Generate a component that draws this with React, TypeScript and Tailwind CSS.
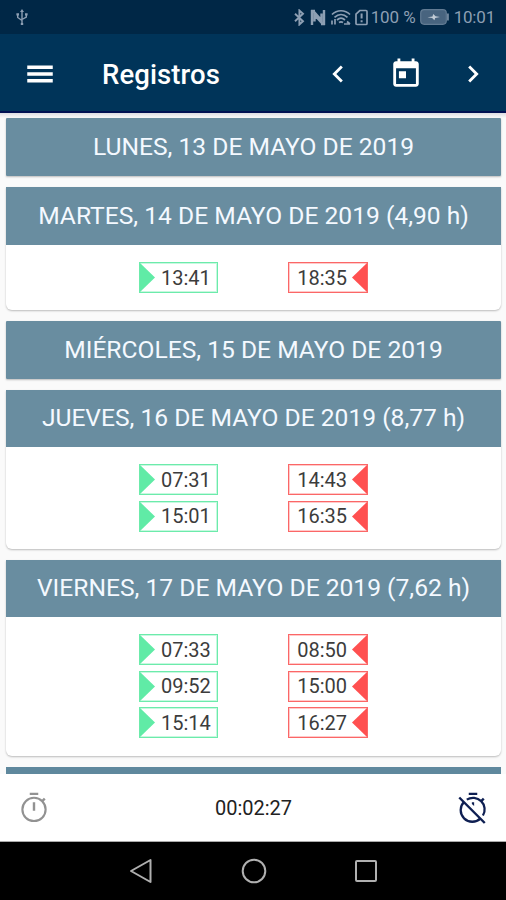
import React from "react";

type IconProps = { d: string; className?: string };

function Icon({ d, className = "" }: IconProps) {
  return (
    <svg viewBox="0 0 24 24" fill="currentColor" className={`size-[34px] shrink-0 ${className}`}>
      <path d={d} />
    </svg>
  );
}

const MENU = "M3 18h18v-2.4H3V18zm0-4.8h18v-2.4H3v2.4zM3 6v2.4h18V6H3z";
const LEFT = "M15.41 7.41L14 6l-6 6 6 6 1.41-1.41L10.83 12z";
const RIGHT = "M10 6L8.59 7.41 13.17 12l-4.58 4.59L10 18l6-6z";
const TODAY =
  "M19 3h-1V1h-2v2H8V1H6v2H5c-1.11 0-1.99.9-1.99 2L3 19c0 1.1.89 2 2 2h14c1.1 0 2-.9 2-2V5c0-1.1-.9-2-2-2zm0 16H5V8h14v11zM7 10h5v5H7z";

function TimerIcon() {
  return (
    <svg viewBox="0 0 24 24" fill="none" stroke="currentColor" strokeWidth="1.5" className="size-[34px] text-[#929292]">
      <circle cx="12" cy="13" r="8.2" />
      <path d="M9 2h6M12 8v6M17.8 7.2l1.8-1.8" strokeWidth="1.7" />
    </svg>
  );
}

function TimerOffIcon() {
  return (
    <svg viewBox="0 0 24 24" fill="none" stroke="currentColor" strokeWidth="1.6" className="size-[34px] text-[#0e1f52]">
      <path d="M7.6 6.1A8.2 8.2 0 0 1 19 17.3M17.3 19.3A8.2 8.2 0 0 1 5.7 7.7" />
      <path d="M9 2h6M17.8 7.2l1.8-1.8M2.3 4.6l18 18" strokeWidth="1.7" />
      <path d="M11.2 8h1.6v2.6l-1.6-1.4z" fill="currentColor" stroke="none" />
    </svg>
  );
}

function StatusBar() {
  return (
    <div className="flex h-[34px] shrink-0 items-center bg-[#002746] pr-[11px] pl-[16px] text-[#8d9fb3]">
      <svg viewBox="0 0 12 17" className="h-[17px] w-[12px]" fill="none" stroke="currentColor" strokeWidth="1.4">
        <path d="M6 2v13M1.7 5.5v3L6 11.5M10.3 5v3L6 10.5" />
        <path d="M6 0l2 3H4zM.4 4.2h2.6v2.4H.4zM9 4.2h2.6v2.4H9zM4.8 14h2.4v2H4.8z" fill="currentColor" stroke="none" />
      </svg>
      <div className="ml-auto flex items-center">
        <svg viewBox="0 0 11 17" className="mr-[5px] h-[17px] w-[11px]" fill="none" stroke="currentColor" strokeWidth="1.9">
          <path d="M1 4.8l8 7.4-3.6 3.3V1.5L9 4.8 1 12.2" />
        </svg>
        <svg viewBox="0 0 16 17" className="mr-[4px] h-[17px] w-[16px]" fill="none" stroke="currentColor">
          <path d="M2 16V2.5l2 .3 7.5 8.4V4.5M14 1v13.5l-2-.3L4.5 6v6.5" strokeWidth="2.4" />
          <path d="M1 1.6h4M11 15.4h4" strokeWidth="1.6" />
        </svg>
        <svg viewBox="0 0 22 17" className="mr-[3px] h-[17px] w-[22px]" fill="none" stroke="currentColor" strokeWidth="1.7">
          <path d="M2 5.5c5-5 13-5 18 0M4.5 8.3c4-3.6 9-3.6 13 0M7 11c2.6-2.3 5.4-2.3 8 0M9 13.5c1.4-1 2.6-1 4 0" />
          <path d="M2 11.5v4M5 10v5.5M14 15h6M17 12.5l3 2.5" />
        </svg>
        <svg viewBox="0 0 13 17" className="mr-[3px] h-[17px] w-[13px]" fill="none" stroke="currentColor" strokeWidth="1.7">
          <path d="M4.8 1.5H11c.8 0 1 .3 1 1v12c0 .7-.3 1-1 1H2c-.7 0-1-.3-1-1V5z" />
          <path d="M6.6 4.5v5M6.6 11.2v2" strokeWidth="2" />
        </svg>
        <span className="w-[49px] text-[17px] leading-[20px] tracking-[-0.1px] whitespace-nowrap">100 %</span>
        <svg viewBox="0 0 29 16" className="mr-[5px] h-[16px] w-[29px]">
          <rect x=".7" y=".7" width="25.6" height="14.6" rx="3.5" fill="#48647f" stroke="#627b93" strokeWidth="1.2" />
          <path d="M27.2 4.5h1.5v7h-1.5z" fill="#8d9fb3" />
          <path d="M7.5 8.3l5-.8.7-2.5 2.4 2.3 4.4.8-4.8.9-.8 2.3-2.3-2.4z" fill="#c2ccd6" />
        </svg>
        <span className="text-[17px] leading-[20px] tracking-[-0.2px]">10:01</span>
      </div>
    </div>
  );
}

function Header() {
  return (
    <header className="flex h-[79px] shrink-0 items-center border-b-2 border-[#001052] bg-[#003459] pr-[16px] pl-[23px] pt-[2px] text-white">
      <Icon d={MENU} />
      <h1 className="ml-[45px] pt-[2px] text-[27.5px] leading-[32px] font-medium tracking-[0.1px]">Registros</h1>
      <div className="ml-auto flex items-center gap-[33.5px]">
        <Icon d={LEFT} />
        <Icon d={TODAY} />
        <Icon d={RIGHT} />
      </div>
    </header>
  );
}

function Chip({ time, kind }: { time: string; kind: "in" | "out" }) {
  if (kind === "in") {
    return (
      <div className="flex h-[31px] w-[79px] items-center border border-[#6cebab] text-[#3c3c3c] shadow-[inset_0_0_0_1px_rgba(96,235,166,0.35)]">
        <svg viewBox="0 0 15 29" className="h-[29px] w-[15px] shrink-0">
          <path d="M0 0l15 14.5L0 29z" fill="#60eba6" />
        </svg>
        <span className="ml-[6px] text-[20px] leading-[24px]">{time}</span>
      </div>
    );
  }
  return (
    <div className="flex h-[31px] w-[80px] items-center justify-end border border-[#fb6767] text-[#3c3c3c] shadow-[inset_0_0_0_1px_rgba(255,80,80,0.3)]">
      <span className="mr-[5px] text-[20px] leading-[24px]">{time}</span>
      <svg viewBox="0 0 15 29" className="h-[29px] w-[15px] shrink-0">
        <path d="M15 0L0 14.5 15 29z" fill="#ff5050" />
      </svg>
    </div>
  );
}

type Day = { title: string; head: string; body: string; rows: [string, string][] };

const days: Day[] = [
  { title: "LUNES, 13 DE MAYO DE 2019", head: "h-[58px]", body: "", rows: [] },
  { title: "MARTES, 14 DE MAYO DE 2019 (4,90 h)", head: "h-[58px]", body: "h-[65px]", rows: [["13:41", "18:35"]] },
  { title: "MIÉRCOLES, 15 DE MAYO DE 2019", head: "h-[58px]", body: "", rows: [] },
  {
    title: "JUEVES, 16 DE MAYO DE 2019 (8,77 h)",
    head: "h-[57px]",
    body: "h-[102px]",
    rows: [["07:31", "14:43"], ["15:01", "16:35"]],
  },
  {
    title: "VIERNES, 17 DE MAYO DE 2019 (7,62 h)",
    head: "h-[57px]",
    body: "h-[139px]",
    rows: [["07:33", "08:50"], ["09:52", "15:00"], ["15:14", "16:27"]],
  },
];

function DayCard({ day }: { day: Day }) {
  return (
    <section className={`shrink-0 overflow-hidden bg-white shadow-[0_1px_2px_rgba(0,0,0,0.25)] ${day.rows.length ? "rounded-b-[6px]" : "rounded-[1px]"}`}>
      <h2 className={`flex items-center justify-center bg-[#698da0] text-[24.6px] font-normal whitespace-nowrap text-[#f4f9ff] ${day.head}`}>
        {day.title}
      </h2>
      {day.rows.length > 0 && (
        <div className={`flex flex-col gap-[5.5px] pt-[17px] pl-[133px] ${day.body}`}>
          {day.rows.map(([start, end]) => (
            <div key={start} className="flex gap-[70px]">
              <Chip time={start} kind="in" />
              <Chip time={end} kind="out" />
            </div>
          ))}
        </div>
      )}
    </section>
  );
}

function TimerBar() {
  return (
    <div className="flex h-[68px] shrink-0 items-center justify-between border-b border-[#aaa] bg-white pr-[16px] pl-[17px]">
      <TimerIcon />
      <span className="text-[20px] leading-[24px] text-[#222]">00:02:27</span>
      <TimerOffIcon />
    </div>
  );
}

function NavBar() {
  return (
    <div className="flex h-[58px] shrink-0 items-center justify-center gap-[88px] bg-black">
      <svg viewBox="0 0 24 26" className="h-[26px] w-[24px]" fill="none" stroke="#b0b0b0" strokeWidth="2" strokeLinejoin="round">
        <path d="M21.5 2v22L2 13z" />
      </svg>
      <svg viewBox="0 0 26 26" className="h-[26px] w-[26px]" fill="none" stroke="#b0b0b0" strokeWidth="2">
        <circle cx="13" cy="13" r="11.3" />
      </svg>
      <svg viewBox="0 0 22 22" className="h-[22px] w-[22px]" fill="none" stroke="#b0b0b0" strokeWidth="2">
        <rect x="1" y="1" width="20" height="20" rx="1" />
      </svg>
    </div>
  );
}

export default function App() {
  return (
    <div className="flex h-[900px] w-[506px] flex-col overflow-hidden bg-[#fafafa] font-['Roboto',sans-serif]">
      <StatusBar />
      <Header />
      <main className="flex min-h-0 flex-1 flex-col overflow-hidden pr-[5px] pl-[6px]">
        <div className="-mr-[5px] -ml-[6px] h-[5px] shrink-0 bg-linear-to-b from-[#dcdce2] to-[#fafafa]" />
        <div className="flex flex-col gap-[11px]">
          {days.map((day) => (
            <DayCard key={day.title} day={day} />
          ))}
          <div className="h-[7px] bg-[#5f889d]" />
        </div>
      </main>
      <TimerBar />
      <NavBar />
    </div>
  );
}
